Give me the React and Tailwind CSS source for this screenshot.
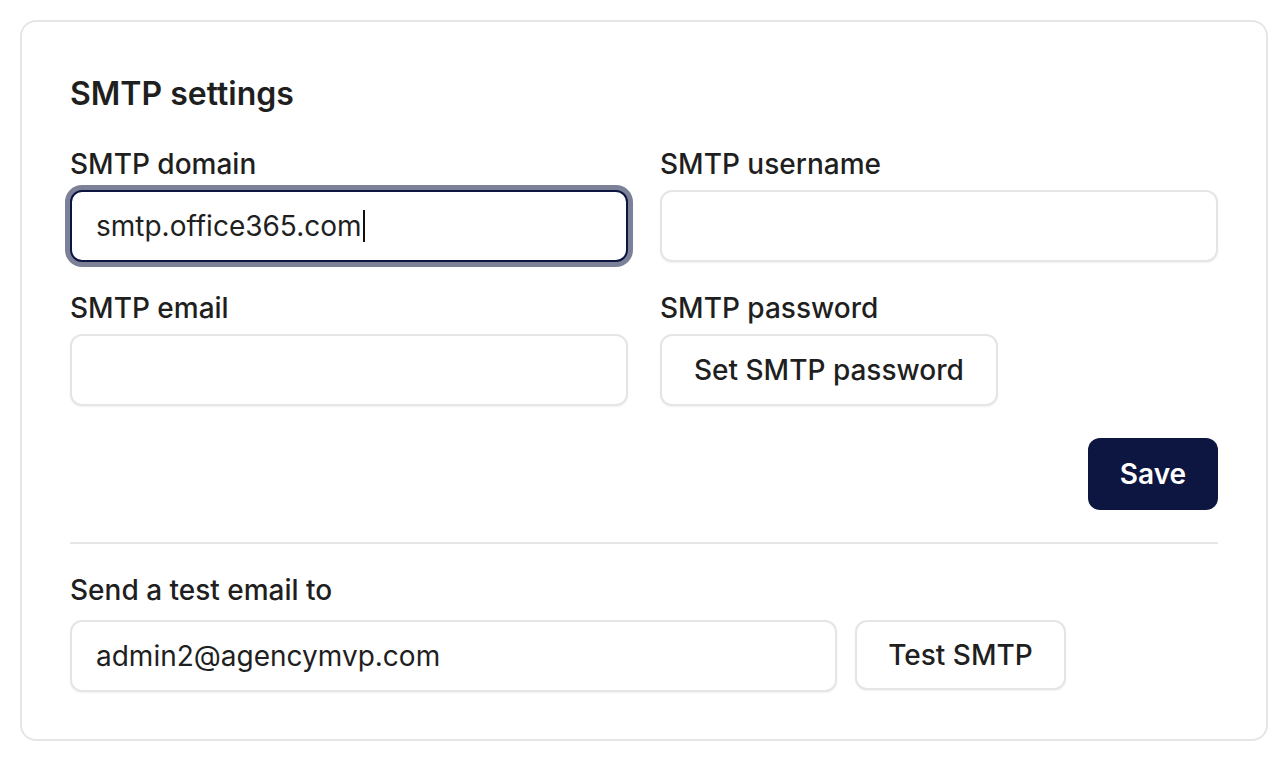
import React from "react";

function Field({ label, children, labelGap = "mb-[6px]" }) {
  return (
    <div className="flex flex-col">
      <div className={`text-[28px] leading-[40px] font-medium text-[#1f1f1f] ${labelGap}`}>{label}</div>
      {children}
    </div>
  );
}

function Box({ children, className = "" }) {
  return (
    <div
      className={`h-[72px] flex items-center px-6 rounded-xl border-2 border-[#e5e5e5] bg-white shadow-[0_1px_2px_rgba(0,0,0,0.06)] text-[28px] text-[#1f1f1f] ${className}`}
    >
      {children}
    </div>
  );
}

export default function App() {
  return (
    <div className="w-[1288px] h-[758px] bg-white p-5 font-['Inter',sans-serif]">
      <div className="border-2 border-[#e6e6e6] rounded-2xl px-12 pt-12 pb-[47px]">
        <h2 className="text-[32px] leading-[48px] font-semibold text-[#1f1f1f]">SMTP settings</h2>

        <div className="mt-[26px] grid grid-cols-2 gap-x-8 gap-y-[26px]">
          <Field label="SMTP domain">
            <div className="h-[72px] flex items-center px-6 rounded-xl border-2 border-[#0d1640] bg-white ring-[5px] ring-[#7c8198] text-[28px] text-[#1f1f1f]">
              <span>smtp.office365.com</span>
              <span className="inline-block w-[2px] h-[32px] bg-[#111] ml-[1px]" />
            </div>
          </Field>
          <Field label="SMTP username">
            <Box />
          </Field>
          <Field label="SMTP email">
            <Box />
          </Field>
          <Field label="SMTP password">
            <div className="flex">
              <button className="h-[72px] px-8 rounded-xl border-2 border-[#e5e5e5] bg-white shadow-[0_1px_2px_rgba(0,0,0,0.06)] text-[28px] font-medium text-[#1f1f1f]">
                Set SMTP password
              </button>
            </div>
          </Field>
        </div>

        <div className="mt-8 flex justify-end">
          <button className="h-[72px] w-[130px] rounded-xl bg-[#0d1640] text-white text-[28px] font-semibold">
            Save
          </button>
        </div>

        <div className="mt-8 h-[2px] bg-[#e6e6e6]" />

        <div className="mt-[26px]">
          <Field label="Send a test email to" labelGap="mb-[10px]">
            <div className="flex gap-[18px]">
              <Box className="w-[767px] h-[70px]">admin2@agencymvp.com</Box>
              <button className="h-[70px] w-[211px] rounded-xl border-2 border-[#e5e5e5] bg-white shadow-[0_1px_2px_rgba(0,0,0,0.06)] text-[28px] font-medium text-[#1f1f1f]">
                Test SMTP
              </button>
            </div>
          </Field>
        </div>
      </div>
    </div>
  );
}
